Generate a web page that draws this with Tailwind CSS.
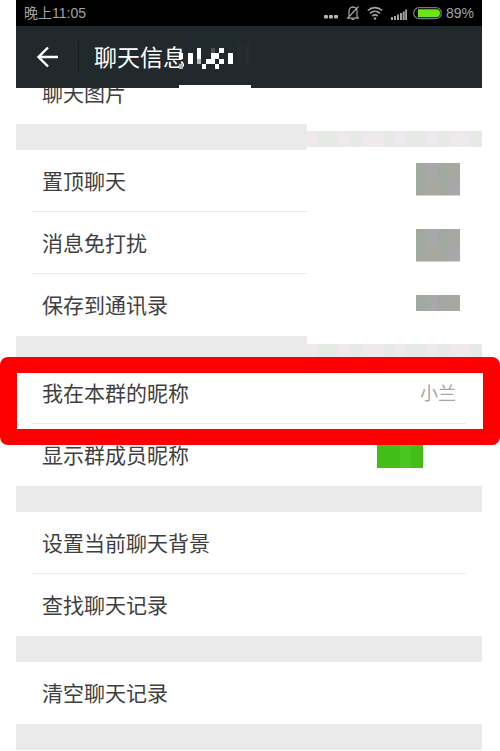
<!DOCTYPE html>
<html lang="zh-CN">
<head>
    <meta charset="UTF-8">
    <meta name="viewport" content="width=device-width, initial-scale=1.0">
    <title>聊天信息</title>
    <script src="https://cdn.jsdelivr.net/npm/@tailwindcss/browser@4"></script>
</head>
<body class="bg-white font-['Liberation_Sans','Noto_Sans_CJK_SC',sans-serif] text-[#3f3f3f]">
    <div class="ml-4 mr-[18px]">
        <!-- Status bar -->
        <div class="flex h-[26px] items-center justify-between bg-black px-2 text-sm text-[#a3a3a3]">
            <span>晚上11:05</span>
            <div class="flex items-center">
                <svg class="mr-2 h-5 w-4" viewBox="0 0 16 20" fill="#b5b5b5">
                    <rect x="1" y="12" width="4" height="3.500" rx="1"/>
                    <rect x="6" y="12" width="4" height="3.500" rx="1"/>
                    <rect x="11" y="12" width="4" height="3.500" rx="1"/>
                </svg>
                <svg class="mr-2 h-5 w-3" viewBox="0 0 12 20" fill="none" stroke="#a3a3a3" stroke-width="1.200">
                    <path d="M2 14V8.500C2 5.500 3.500 4.200 6 4.200S10 5.500 10 8.500V14L11.500 15.200H.5L2 14M6 4.200V3M4.500 16.500H7.500M.3 15.500L11.500 3.500"/>
                </svg>
                <svg class="mr-2 h-5 w-4" viewBox="0 0 16 20" fill="none" stroke="#a3a3a3" stroke-width="1.700">
                    <path d="M.8 7.500C5 3.600 11 3.600 15.200 7.500M3 10.300C6 7.600 10 7.600 13 10.300M5.300 13C7 11.500 9 11.500 10.700 13"/>
                    <circle cx="8" cy="15.500" r="1.300" fill="#a3a3a3" stroke="none"/>
                </svg>
                <svg class="mr-1.5 h-5 w-4" viewBox="0 0 16 20" fill="#a3a3a3">
                    <path d="M0 14h2v3H0zM3 13h2v4H3zM6 11.500h2V17H6zM9 10h2v7H9zM11.700 8.500h2V17h-2zM14.200 6.500H16V17h-1.800z"/>
                </svg>
                <svg class="mr-1 h-5 w-[29px]" viewBox="0 0 29 20">
                    <rect x=".7" y="4.700" width="27.600" height="11" rx="5.500" fill="none" stroke="#777" stroke-width="1.300"/>
                    <path d="M5 6.200H23A4 4 0 0 1 23 14.300H5z" fill="#6be314"/>
                </svg>
                <span>89%</span>
            </div>
        </div>

        <!-- Title bar -->
        <header class="relative flex h-[62px] items-center bg-[#22292c] text-white">
            <button type="button" aria-label="返回" class="flex h-8 w-[63px] items-center border-r border-[#171d1f] pl-5">
                <svg class="h-6 w-6" viewBox="0 0 24 24" fill="none" stroke="#fff" stroke-width="2.400">
                    <path d="M22 12H3M12 2.500L2.500 12L12 21.500"/>
                </svg>
            </button>
            <h1 class="ml-[15px] pt-0.5 text-[23px] leading-8">聊天信息</h1>
            <svg class="absolute top-0 left-[163px] h-[62px] w-[72px]" viewBox="0 0 72 62" shape-rendering="crispEdges">
                <path d="M5 17H72V59H5zM0 43H5V59H0z" fill="#22292c"/>
                <path d="M0 59H72V62H0z" fill="#fff"/>
                <path d="M58 17h4v22h-4zM66 17h5v22h-5z" fill="#292a2e"/>
                <path d="M9 0h4v15H9zM27 0h4v15h-4zM54 0h4v15h-4zM9 43h4v16H9zM27 43h4v16h-4z" fill="#202735"/>
                <path d="M0 27h4v6H0zM9 27h5v11H9zM18 22h4v11h-4zM23 38h4v5h-4zM27 33h9v5h-9zM32 27h8v6h-8zM40 22h5v5h-5zM40 33h5v5h-5zM36 38h4v5h-4zM49 27h5v11h-5z" fill="#fff"/>
                <path d="M0 38h4v5H0zM18 33h4v5h-4z" fill="#b4b7b9"/>
                <path d="M32 22h4v5h-4z" fill="#4c5052"/>
            </svg>
        </header>

        <main class="text-[21px] leading-8">
            <div class="flex h-9 items-end overflow-hidden">
                <a href="#" class="flex h-[62px] flex-1 shrink-0 items-center pt-0.5 pl-[26px]">聊天图片</a>
            </div>

            <div class="flex h-[26px] items-center">
                <div class="h-full w-[291px] bg-[#eaeaea]"></div>
                <div class="mt-1 h-4 flex-1 bg-[linear-gradient(90deg,#efe9ee_6%,#e5eae5_6%_18%,#efe9ee_18%_25%,#e5eae5_25%_31%,#efe9ee_31%_44%,#e5eae5_44%_50%,#efe9ee_50%_56%,#e5eae5_56%_68%,#efe9ee_68%_75%,#e5eae5_75%_81%,#efe9ee_81%_94%,#e5eae5_94%)]"></div>
            </div>

            <label class="flex h-[62px] items-center justify-between pr-[22px] pl-[26px]">
                <span class="pt-0.5">置顶聊天</span>
                <input type="checkbox" class="mb-1 h-[33px] w-11 appearance-none bg-[linear-gradient(90deg,#a1a9a1_25%,#a9a7ab_25%_50%,#a1a9a1_50%_75%,#aaa79f_75%),linear-gradient(90deg,#a1a9a1_25%,#aaa79f_25%_50%,#a1a9a1_50%_75%,#a9a7ab_75%)] bg-[size:100%_50%] bg-[position:top,bottom] bg-no-repeat">
            </label>
            <div class="ml-4 -mt-px h-px w-[275px] bg-[#e9e9e9]"></div>
            <label class="flex h-[62px] items-center justify-between pr-[22px] pl-[26px]">
                <span class="pt-0.5">消息免打扰</span>
                <input type="checkbox" class="mt-1 h-[33px] w-11 appearance-none bg-[linear-gradient(90deg,#a1a9a1_25%,#a9a7ab_25%_50%,#a1a9a1_50%_75%,#aaa79f_75%),linear-gradient(90deg,#a1a9a1_25%,#aaa79f_25%_50%,#a1a9a1_50%_75%,#a9a7ab_75%)] bg-[size:100%_50%] bg-[position:top,bottom] bg-no-repeat">
            </label>
            <div class="ml-4 -mt-px h-px w-[275px] bg-[#e9e9e9]"></div>
            <label class="flex h-[62px] items-center justify-between pr-[22px] pl-[26px]">
                <span class="pt-0.5">保存到通讯录</span>
                <input type="checkbox" class="mb-1 h-4 w-11 appearance-none bg-[linear-gradient(90deg,#a1a9a1_25%,#a9a7ab_25%_50%,#a1a9a1_50%_75%,#aaa79f_75%)]">
            </label>

            <div class="flex h-[26px] items-end">
                <div class="h-full w-[291px] bg-[#eaeaea]"></div>
                <div class="h-[18px] flex-1 bg-[linear-gradient(90deg,#efe9ee_6%,#e5eae5_6%_18%,#efe9ee_18%_25%,#e5eae5_25%_31%,#efe9ee_31%_44%,#e5eae5_44%_50%,#efe9ee_50%_56%,#e5eae5_56%_68%,#efe9ee_68%_75%,#e5eae5_75%_81%,#efe9ee_81%_94%,#e5eae5_94%)]"></div>
            </div>

            <!-- Nickname row with the red marker frame -->
            <div class="relative">
                <a href="#" class="flex h-[62px] items-center justify-between pt-0.5 pr-[26px] pl-[26px]">
                    <span>我在本群的昵称</span>
                    <span class="text-lg text-[#a5a5a5]">小兰</span>
                </a>
                <div class="mx-4 -mt-px h-px bg-[#e9e9e9]"></div>
                <div class="pointer-events-none absolute -top-[5px] -right-[18px] -left-4 h-[88px] rounded-lg border-x-[17px] border-y-[16px] border-[#fe0000]"></div>
            </div>
            <label class="flex h-[62px] items-center justify-between pr-[59px] pl-[26px]">
                <span class="pt-0.5">显示群成员昵称</span>
                <input type="checkbox" checked class="h-[26px] w-[46px] appearance-none bg-[linear-gradient(90deg,#43bd18_50%,#4ac522_50%_75%,#43bd18_75%)]">
            </label>

            <div class="h-[26px] bg-[#eaeaea]"></div>

            <a href="#" class="flex h-[62px] items-center pt-0.5 pl-[26px]">设置当前聊天背景</a>
            <div class="mx-4 -mt-px h-px bg-[#e9e9e9]"></div>
            <a href="#" class="flex h-[62px] items-center pt-0.5 pl-[26px]">查找聊天记录</a>

            <div class="h-[26px] bg-[#eaeaea]"></div>

            <button type="button" class="flex h-[62px] w-full items-center pt-0.5 pl-[26px]">清空聊天记录</button>

            <div class="h-[26px] bg-[#eaeaea]"></div>
        </main>
    </div>
</body>
</html>
